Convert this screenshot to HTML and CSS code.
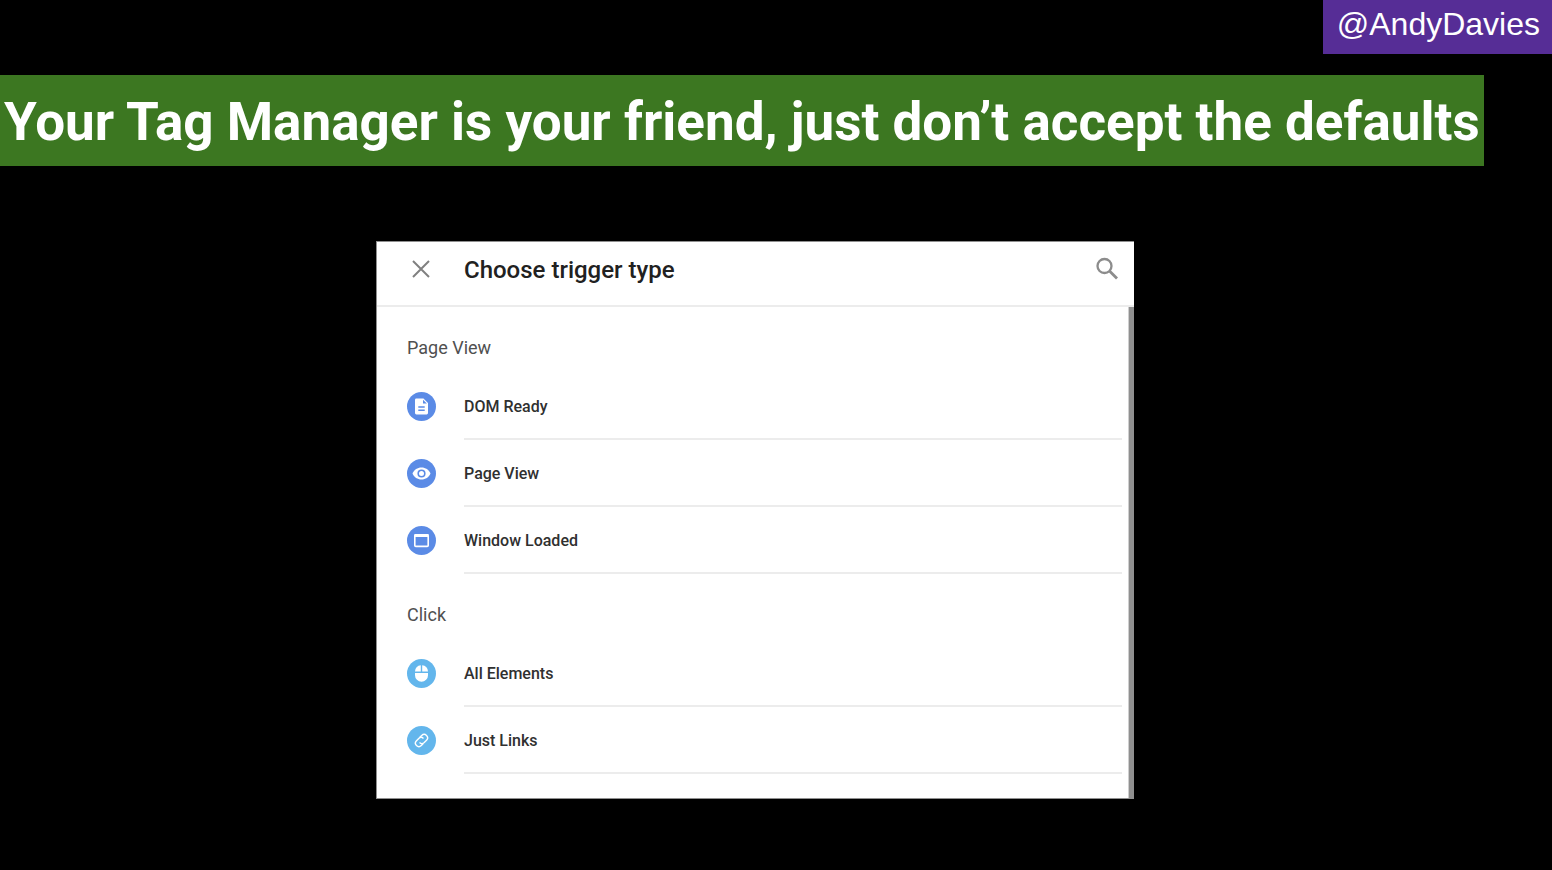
FILE: index.html
```html
<!DOCTYPE html>
<html lang="en">
<head>
    <meta charset="UTF-8">
    <meta name="viewport" content="width=device-width, initial-scale=1.0">
    <title>Your Tag Manager is your friend</title>
    <link rel="stylesheet" href="styles.css">
</head>
<body>
    <!-- Speaker handle -->
    <header class="top-bar">
        <a href="#" class="handle">@AndyDavies</a>
    </header>

    <h1 class="banner">Your Tag Manager is your friend, just don’t accept the defaults</h1>

    <!-- Trigger picker -->
    <main class="stage">
        <section class="panel" aria-labelledby="panelTitle">
            <div class="panel-header">
                <button class="icon-btn" type="button" aria-label="Close">
                    <svg width="28" height="28" viewBox="0 0 28 28" fill="none" stroke="#808080" stroke-width="2">
                        <path d="M6 6L22 22M22 6L6 22"/>
                    </svg>
                </button>
                <h2 class="panel-title" id="panelTitle">Choose trigger type</h2>
                <button class="icon-btn" type="button" aria-label="Search">
                    <svg width="28" height="28" viewBox="0 0 28 28" fill="none" stroke="#8c8c8c">
                        <circle cx="11.5" cy="11" r="7" stroke-width="2.3"/>
                        <path d="M16.5 16L24 23.5" stroke-width="2.8"/>
                    </svg>
                </button>
            </div>

            <div class="panel-body">
                <div class="trigger-list">
                    <h3 class="group-title">Page View</h3>
                    <ul class="group">
                        <li>
                            <button class="trigger" type="button">
                                <svg class="trigger-icon" viewBox="0 0 29 29">
                                    <circle cx="14.5" cy="14.5" r="14.5" fill="#5b8be6"/>
                                    <path d="M9.5 6.5h7l4.5 4.5v10a1.4 1.4 0 0 1-1.4 1.4H9.4A1.4 1.4 0 0 1 8 21V7.9a1.4 1.4 0 0 1 1.5-1.4z" fill="#fff"/>
                                    <path d="M16 7.8V11.5h3.8z" fill="#5b8be6"/>
                                    <path d="M11.3 15h6.4M11.3 18.3h6.4" stroke="#5b8be6" stroke-width="1.4"/>
                                </svg>
                                <span class="trigger-name">DOM Ready</span>
                            </button>
                        </li>
                        <li>
                            <button class="trigger" type="button">
                                <svg class="trigger-icon" viewBox="0 0 29 29">
                                    <circle cx="14.5" cy="14.5" r="14.5" fill="#5b8be6"/>
                                    <path d="M5.5 14.5C7 10.8 10.5 8.5 14.5 8.5s7.5 2.3 9 6c-1.5 3.7-5 6-9 6s-7.5-2.3-9-6z" fill="#fff"/>
                                    <circle cx="14.5" cy="14.5" r="3.3" fill="#fff" stroke="#5b8be6" stroke-width="1.6"/>
                                </svg>
                                <span class="trigger-name">Page View</span>
                            </button>
                        </li>
                        <li>
                            <button class="trigger" type="button">
                                <svg class="trigger-icon" viewBox="0 0 29 29">
                                    <circle cx="14.5" cy="14.5" r="14.5" fill="#5b8be6"/>
                                    <rect x="7.8" y="8.8" width="13.4" height="11.6" rx="1" fill="none" stroke="#fff" stroke-width="1.6"/>
                                    <path d="M7.5 9.5h14" stroke="#fff" stroke-width="3"/>
                                </svg>
                                <span class="trigger-name">Window Loaded</span>
                            </button>
                        </li>
                    </ul>

                    <h3 class="group-title">Click</h3>
                    <ul class="group">
                        <li>
                            <button class="trigger" type="button">
                                <svg class="trigger-icon" viewBox="0 0 29 29">
                                    <circle cx="14.5" cy="14.5" r="14.5" fill="#63b6ec"/>
                                    <path d="M8 12.5A6 6 0 0 1 13.8 6.2v6.3zM15.2 6.2A6 6 0 0 1 21 12.5h-5.8zM8 13.9h13v2.3a6.5 6.5 0 0 1-13 0z" fill="#fff"/>
                                </svg>
                                <span class="trigger-name">All Elements</span>
                            </button>
                        </li>
                        <li>
                            <button class="trigger" type="button">
                                <svg class="trigger-icon" viewBox="0 0 29 29">
                                    <circle cx="14.5" cy="14.5" r="14.5" fill="#63b6ec"/>
                                    <g transform="rotate(-45 14.5 14.5)" fill="none" stroke="#fff" stroke-width="1.4">
                                        <path d="M13.4 17.9H10.8a3.4 3.4 0 0 1 0-6.8H14a3.4 3.4 0 0 1 3.3 3.4"/>
                                        <path d="M15.6 11.1h2.6a3.4 3.4 0 0 1 0 6.8H15a3.4 3.4 0 0 1-3.3-3.4"/>
                                    </g>
                                </svg>
                                <span class="trigger-name">Just Links</span>
                            </button>
                        </li>
                    </ul>
                </div>
                <div class="scrollbar"></div>
            </div>
        </section>
    </main>
</body>
</html>
```
FILE: styles.css
```css
* {
    margin: 0;
    padding: 0;
    box-sizing: border-box;
}

body {
    background-color: #000;
    min-height: 100vh;
    font-family: Roboto, "Liberation Sans", sans-serif;
}

/* Speaker handle */
.top-bar {
    display: flex;
    justify-content: flex-end;
}

.handle {
    height: 54px;
    padding: 6px 12px 0 14px;
    background-color: #562d96;
    color: #fff;
    font-family: "Liberation Sans", Arial, sans-serif;
    font-size: 32px;
    line-height: 36px;
    text-decoration: none;
}

/* Banner */
.banner {
    margin: 21px 68px 0 0;
    padding: 4px 4px 0;
    background-color: #3c7721;
    color: #fff;
    font-size: 53px;
    font-weight: 700;
    line-height: 87px;
    white-space: nowrap;
}

/* Panel */
.stage {
    display: flex;
    justify-content: center;
    padding: 75px 42px 72px 0;
}

.panel {
    width: 758px;
    background-color: #fff;
    border: 1px solid #8f8f8f;
    border-right: 0;
}

.panel-header {
    display: flex;
    align-items: center;
    height: 65px;
    padding: 0 13px 9px 30px;
    border-bottom: 2px solid #ececec;
}

.icon-btn {
    display: flex;
    width: 28px;
    height: 28px;
    background: none;
    border: none;
    cursor: pointer;
}

.panel-title {
    flex: 1;
    margin-left: 29px;
    padding-top: 2px;
    color: #212121;
    font-size: 24px;
    font-weight: 500;
    line-height: 32px;
}

.panel-body {
    display: flex;
}

.trigger-list {
    flex: 1;
    padding: 0 6px 24px 30px;
}

.scrollbar {
    width: 6px;
    background-color: #8f8f8f;
    border-left: 1px solid #cfcfcf;
}

.group-title {
    height: 66px;
    padding-top: 30px;
    color: #505050;
    font-size: 18px;
    font-weight: 400;
    line-height: 22px;
}

.group {
    list-style: none;
}

.trigger {
    display: flex;
    align-items: center;
    width: 100%;
    background: none;
    border: none;
    font-family: inherit;
    text-align: left;
    cursor: pointer;
}

.trigger-icon {
    width: 29px;
    height: 29px;
    margin-right: 28px;
}

.trigger-name {
    flex: 1;
    padding-top: 2px;
    border-bottom: 2px solid #ececec;
    color: #303030;
    font-size: 16px;
    font-weight: 500;
    line-height: 63px;
}
```
